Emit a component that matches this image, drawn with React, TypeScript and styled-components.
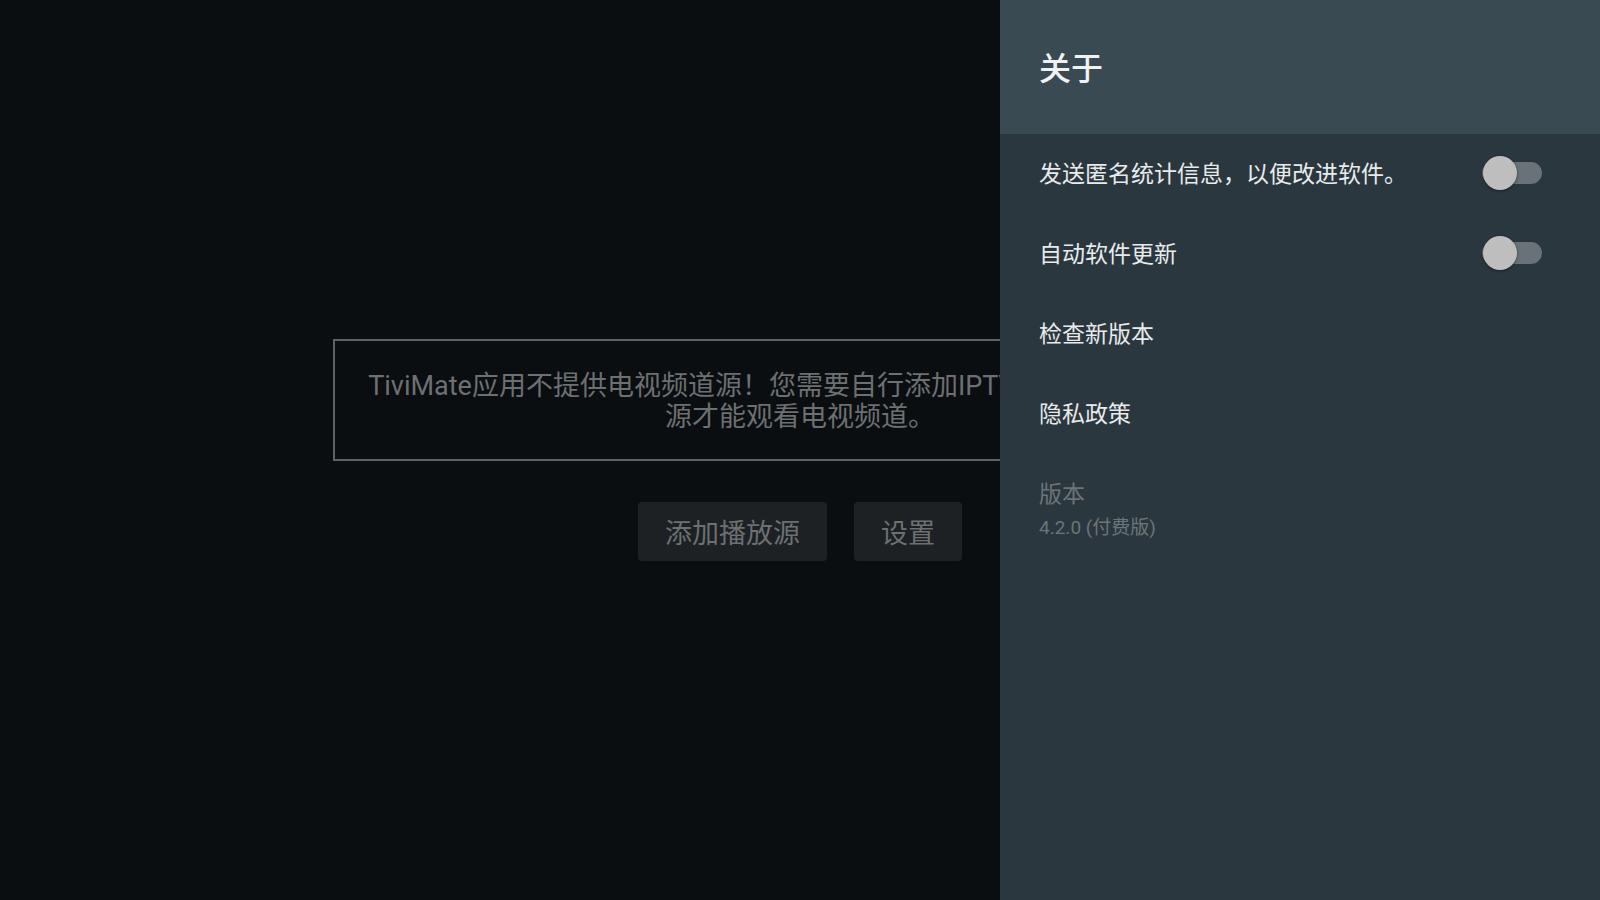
import React from 'react'
import styled, { createGlobalStyle } from 'styled-components'

const GlobalStyle = createGlobalStyle`
  html, body {
    margin: 0;
    padding: 0;
    background: #0b0e10;
  }
  body {
    font-family: Roboto, 'Noto Sans CJK SC', sans-serif;
    overflow: hidden;
  }
`

const settings = [
  { label: '发送匿名统计信息，以便改进软件。', toggle: true },
  { label: '自动软件更新', toggle: true },
  { label: '检查新版本', toggle: false },
  { label: '隐私政策', toggle: false },
]

const App = () => {
  return (
    <>
      <GlobalStyle />
      <Screen>
        <EmptyState>
          <NoticeBox>
            <NoticeText>
              TiviMate应用不提供电视频道源！您需要自行添加IPTV播放列表或者门户
              <br />
              源才能观看电视频道。
            </NoticeText>
          </NoticeBox>
          <ButtonRow>
            <ActionButton>添加播放源</ActionButton>
            <ActionButton>设置</ActionButton>
          </ButtonRow>
        </EmptyState>

        <Drawer>
          <DrawerHeader>关于</DrawerHeader>
          <SettingsList>
            {settings.map((s) => (
              <SettingRow key={s.label}>
                <RowLabel>{s.label}</RowLabel>
                {s.toggle && <Switch checked={false} />}
              </SettingRow>
            ))}
            <VersionBlock>
              <VersionLabel>版本</VersionLabel>
              <VersionValue>4.2.0 (付费版)</VersionValue>
            </VersionBlock>
          </SettingsList>
        </Drawer>
      </Screen>
    </>
  )
}

const Switch = ({ checked }: { checked: boolean }) => (
  <SwitchTrack $checked={checked}>
    <SwitchThumb $checked={checked} />
  </SwitchTrack>
)

const Screen = styled.div`
  position: relative;
  width: 1600px;
  height: 900px;
  background: #0b0e10;
  overflow: hidden;
`

const EmptyState = styled.div`
  height: 100%;
  display: flex;
  flex-direction: column;
  align-items: center;
  justify-content: center;
`

const NoticeBox = styled.div`
  box-sizing: border-box;
  width: 934px;
  height: 122px;
  padding-top: 4px;
  border: 2px solid #5f6264;
  display: flex;
  align-items: center;
  justify-content: center;
  overflow: hidden;
`

const NoticeText = styled.div`
  font-size: 27px;
  line-height: 31px;
  color: #6c7072;
  text-align: center;
  white-space: nowrap;
`

const ButtonRow = styled.div`
  display: flex;
  gap: 27px;
  margin-top: 41px;
`

const ActionButton = styled.div`
  height: 59px;
  padding: 0 27px;
  display: flex;
  align-items: center;
  background: #1d2124;
  border-radius: 4px;
  font-size: 27px;
  color: #6c7072;
`

const Drawer = styled.aside`
  position: absolute;
  top: 0;
  right: 0;
  width: 600px;
  height: 100%;
  background: #2b373e;
  display: flex;
  flex-direction: column;
`

const DrawerHeader = styled.div`
  box-sizing: border-box;
  height: 134px;
  flex-shrink: 0;
  background: #3a4a53;
  display: flex;
  align-items: center;
  padding: 0 0 3px 39px;
  font-size: 32px;
  font-weight: 500;
  color: #f0f2f3;
`

const SettingsList = styled.div`
  display: flex;
  flex-direction: column;
`

const SettingRow = styled.div`
  box-sizing: border-box;
  height: 80px;
  display: flex;
  align-items: center;
  justify-content: space-between;
  padding: 0 58px 4px 39px;
`

const RowLabel = styled.span`
  font-size: 23px;
  color: #e8ebec;
`

const SwitchTrack = styled.div<{ $checked: boolean }>`
  position: relative;
  top: 1px;
  width: 60px;
  height: 22px;
  border-radius: 11px;
  background: ${({ $checked }) => ($checked ? '#4f8a8b' : '#687278')};
`

const SwitchThumb = styled.div<{ $checked: boolean }>`
  position: absolute;
  top: -6px;
  left: ${({ $checked }) => ($checked ? '25px' : '1px')};
  width: 34px;
  height: 34px;
  border-radius: 50%;
  background: #bebebe;
  box-shadow: 0 1px 3px rgba(0, 0, 0, 0.45);
`

const VersionBlock = styled.div`
  padding: 26px 39px 0;
  display: flex;
  flex-direction: column;
`

const VersionLabel = styled.span`
  font-size: 23px;
  line-height: 30px;
  color: #6b7479;
`

const VersionValue = styled.span`
  margin-top: 6px;
  font-size: 19px;
  line-height: 24px;
  color: #6b7479;
`

export default App
